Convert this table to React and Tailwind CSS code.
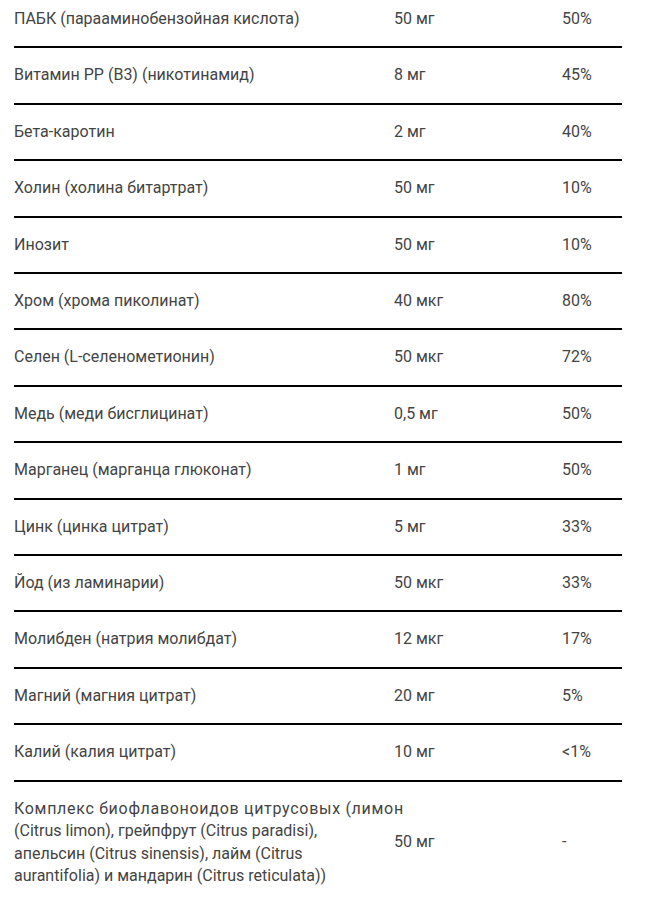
const rows = [
  ["ПАБК (парааминобензойная кислота)", "50 мг", "50%"],
  ["Витамин PP (B3) (никотинамид)", "8 мг", "45%"],
  ["Бета-каротин", "2 мг", "40%"],
  ["Холин (холина битартрат)", "50 мг", "10%"],
  ["Инозит", "50 мг", "10%"],
  ["Хром (хрома пиколинат)", "40 мкг", "80%"],
  ["Селен (L-селенометионин)", "50 мкг", "72%"],
  ["Медь (меди бисглицинат)", "0,5 мг", "50%"],
  ["Марганец (марганца глюконат)", "1 мг", "50%"],
  ["Цинк (цинка цитрат)", "5 мг", "33%"],
  ["Йод (из ламинарии)", "50 мкг", "33%"],
  ["Молибден (натрия молибдат)", "12 мкг", "17%"],
  ["Магний (магния цитрат)", "20 мг", "5%"],
  ["Калий (калия цитрат)", "10 мг", "<1%"],
];

// last row wraps over four lines, first one is a bit wider in the source
const complexName = (
  <>
    <span className="tracking-[0.7px]">Комплекс биофлавоноидов цитрусовых (лимон</span>
    <br />
    (Citrus limon), грейпфрут (Citrus paradisi),
    <br />
    апельсин (Citrus sinensis), лайм (Citrus
    <br />
    aurantifolia) и мандарин (Citrus reticulata))
  </>
);

function Row({ name, amount, pct, last }) {
  return (
    <div
      className={
        "grid grid-cols-[380px_168px_60px] items-center py-4 " +
        (last ? "" : "border-b-2 border-black")
      }
    >
      <div className="whitespace-nowrap">{name}</div>
      <div>{amount}</div>
      <div>{pct}</div>
    </div>
  );
}

export default function App() {
  return (
    <div className="min-h-screen bg-white overflow-hidden">
      <div className="ml-[14px] w-[608px] -mt-[8px] font-['Roboto',sans-serif] text-[16px] leading-[22.4px] text-[#444]">
        {rows.map(([name, amount, pct], i) => (
          <Row key={i} name={name} amount={amount} pct={pct} />
        ))}
        <Row name={complexName} amount="50 мг" pct="-" last />
      </div>
    </div>
  );
}
